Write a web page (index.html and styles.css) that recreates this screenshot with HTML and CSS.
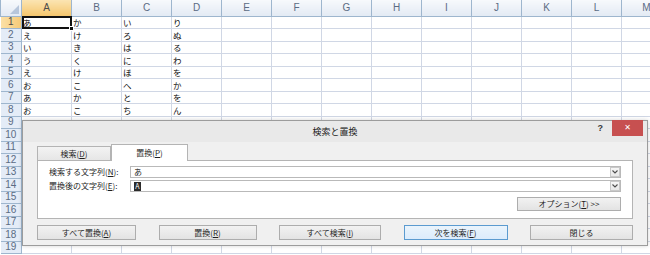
FILE: index.html
```html
<!DOCTYPE html>
<html lang="ja">
<head>
  <meta charset="UTF-8">
  <title>検索と置換</title>
  <link rel="stylesheet" href="styles.css">
</head>
<body>

  <!-- Worksheet -->
  <div class="sheet">
    <table class="grid">
      <colgroup>
        <col class="rowcol">
        <col span="13" class="datacol">
      </colgroup>
      <tr class="colhead">
        <th class="corner"><span class="corner-mark"></span></th>
        <th class="sel">A</th><th>B</th><th>C</th><th>D</th><th>E</th><th>F</th><th>G</th>
        <th>H</th><th>I</th><th>J</th><th>K</th><th>L</th><th>M</th>
      </tr>
      <tr><th class="sel">1</th><td class="active">あ<span class="handle"></span></td><td>か</td><td>い</td><td>り</td><td></td><td></td><td></td><td></td><td></td><td></td><td></td><td></td><td></td></tr>
      <tr><th>2</th><td>え</td><td>け</td><td>ろ</td><td>ぬ</td><td></td><td></td><td></td><td></td><td></td><td></td><td></td><td></td><td></td></tr>
      <tr><th>3</th><td>い</td><td>き</td><td>は</td><td>る</td><td></td><td></td><td></td><td></td><td></td><td></td><td></td><td></td><td></td></tr>
      <tr><th>4</th><td>う</td><td>く</td><td>に</td><td>わ</td><td></td><td></td><td></td><td></td><td></td><td></td><td></td><td></td><td></td></tr>
      <tr><th>5</th><td>え</td><td>け</td><td>ほ</td><td>を</td><td></td><td></td><td></td><td></td><td></td><td></td><td></td><td></td><td></td></tr>
      <tr><th>6</th><td>お</td><td>こ</td><td>へ</td><td>か</td><td></td><td></td><td></td><td></td><td></td><td></td><td></td><td></td><td></td></tr>
      <tr><th>7</th><td>あ</td><td>か</td><td>と</td><td>を</td><td></td><td></td><td></td><td></td><td></td><td></td><td></td><td></td><td></td></tr>
      <tr><th>8</th><td>お</td><td>こ</td><td>ち</td><td>ん</td><td></td><td></td><td></td><td></td><td></td><td></td><td></td><td></td><td></td></tr>
      <tr><th>9</th><td></td><td></td><td></td><td></td><td></td><td></td><td></td><td></td><td></td><td></td><td></td><td></td><td></td></tr>
      <tr><th>10</th><td></td><td></td><td></td><td></td><td></td><td></td><td></td><td></td><td></td><td></td><td></td><td></td><td></td></tr>
      <tr><th>11</th><td></td><td></td><td></td><td></td><td></td><td></td><td></td><td></td><td></td><td></td><td></td><td></td><td></td></tr>
      <tr><th>12</th><td></td><td></td><td></td><td></td><td></td><td></td><td></td><td></td><td></td><td></td><td></td><td></td><td></td></tr>
      <tr><th>13</th><td></td><td></td><td></td><td></td><td></td><td></td><td></td><td></td><td></td><td></td><td></td><td></td><td></td></tr>
      <tr><th>14</th><td></td><td></td><td></td><td></td><td></td><td></td><td></td><td></td><td></td><td></td><td></td><td></td><td></td></tr>
      <tr><th>15</th><td></td><td></td><td></td><td></td><td></td><td></td><td></td><td></td><td></td><td></td><td></td><td></td><td></td></tr>
      <tr><th>16</th><td></td><td></td><td></td><td></td><td></td><td></td><td></td><td></td><td></td><td></td><td></td><td></td><td></td></tr>
      <tr><th>17</th><td></td><td></td><td></td><td></td><td></td><td></td><td></td><td></td><td></td><td></td><td></td><td></td><td></td></tr>
      <tr><th>18</th><td></td><td></td><td></td><td></td><td></td><td></td><td></td><td></td><td></td><td></td><td></td><td></td><td></td></tr>
      <tr><th>19</th><td></td><td></td><td></td><td></td><td></td><td></td><td></td><td></td><td></td><td></td><td></td><td></td><td></td></tr>
    </table>

    <!-- Find & Replace dialog -->
    <div class="dialog">
      <div class="titlebar">
        <span></span>
        <span class="title">検索と置換</span>
        <div class="controls">
          <span class="help">?</span>
          <span class="close">✕</span>
        </div>
      </div>

      <div class="dialog-body">
        <div class="tabs">
          <div class="tab">検索(<u>D</u>)</div>
          <div class="tab active">置換(<u>P</u>)</div>
        </div>

        <div class="panel">
          <div class="field">
            <label>検索する文字列(<u>N</u>):</label>
            <div class="combo">
              <span class="value">あ</span>
              <span class="arrow"><svg width="6" height="4" viewBox="0 0 6 4"><path d="M0.5 0.5 L3 3 L5.5 0.5" fill="none" stroke="#4d4d4d" stroke-width="1.1"/></svg></span>
            </div>
          </div>
          <div class="field">
            <label>置換後の文字列(<u>E</u>):</label>
            <div class="combo">
              <span class="value"><span class="picked">A</span></span>
              <span class="arrow"><svg width="6" height="4" viewBox="0 0 6 4"><path d="M0.5 0.5 L3 3 L5.5 0.5" fill="none" stroke="#4d4d4d" stroke-width="1.1"/></svg></span>
            </div>
          </div>
          <div class="options-row">
            <button class="btn options">オプション(<u>T</u>) &gt;&gt;</button>
          </div>
        </div>

        <div class="actions">
          <button class="btn">すべて置換(<u>A</u>)</button>
          <button class="btn">置換(<u>R</u>)</button>
          <button class="btn">すべて検索(<u>I</u>)</button>
          <button class="btn default">次を検索(<u>F</u>)</button>
          <button class="btn">閉じる</button>
        </div>
      </div>
    </div>
  </div>

</body>
</html>
```

FILE: styles.css
```css
* {
  margin: 0;
  padding: 0;
  box-sizing: border-box;
}

body {
  width: 650px;
  height: 255px;
  overflow: hidden;
  background-color: #ffffff;
  font-family: "Noto Sans CJK JP", "Noto Sans", sans-serif;
}

/* Worksheet */

.sheet {
  position: relative;
  width: 650px;
  height: 255px;
  overflow: hidden;
}

.grid {
  border-collapse: collapse;
  table-layout: fixed;
  width: 671px;
}

.rowcol {
  width: 21px;
}

.datacol {
  width: 50px;
}

.grid tr {
  height: 12.5px;
}

.grid .colhead {
  height: 16px;
}

.grid th {
  font-family: "Liberation Sans", Arial, sans-serif;
  font-weight: normal;
  font-size: 10px;
  line-height: 10px;
  color: #5b6b83;
  padding: 0;
  overflow: hidden;
}

.colhead th {
  background: linear-gradient(#f7f9fc, #e3eaf4);
  border: 1px solid #9eb6ce;
  border-top: none;
  text-align: center;
  vertical-align: middle;
}

.grid tr:not(.colhead) th {
  background-color: #e4ecf7;
  border: 1px solid #9eb6ce;
  border-left: none;
  text-align: center;
}

.grid th.sel {
  background: linear-gradient(#fbe4b2, #f5c66d);
  color: #4c4c4c;
}

.grid tr:not(.colhead) th.sel {
  background: linear-gradient(90deg, #fbe0a6, #f6ca78);
}

.corner {
  position: relative;
}

.corner-mark {
  position: absolute;
  right: 2px;
  bottom: 2px;
  width: 0;
  height: 0;
  border-left: 9px solid transparent;
  border-bottom: 9px solid #b7c6db;
}

.grid td {
  border: 1px solid #d0d7e5;
  font-size: 8.5px;
  line-height: 11px;
  padding: 0 1px;
  color: #111111;
  vertical-align: bottom;
  white-space: nowrap;
  overflow: hidden;
}

.grid td.active {
  position: relative;
  overflow: visible;
  outline: 2px solid #111111;
  outline-offset: -2px;
}

.handle {
  position: absolute;
  right: -3px;
  bottom: -3px;
  width: 5px;
  height: 5px;
  background-color: #111111;
  border: 1px solid #ffffff;
}

/* Dialog */

.dialog {
  position: absolute;
  left: 22px;
  top: 120px;
  width: 626px;
  height: 126px;
  background-color: #f0f0f0;
  border: 1px solid #9c9c9c;
  box-shadow: 0 0 4px rgba(0, 0, 0, 0.18);
  font-size: 8px;
  color: #1e1e1e;
}

.titlebar {
  display: grid;
  grid-template-columns: 1fr auto 1fr;
  height: 21px;
  background-color: #e9e9e9;
}

.title {
  font-size: 9px;
  line-height: 21px;
  color: #222222;
}

.controls {
  display: flex;
  justify-content: flex-end;
  align-items: flex-start;
  padding-right: 4px;
}

.help {
  font-family: "Liberation Sans", Arial, sans-serif;
  font-weight: bold;
  font-size: 9px;
  line-height: 15px;
  color: #3a3a3a;
  margin-right: 9px;
}

.close {
  width: 31px;
  height: 16px;
  margin-top: -1px;
  background-color: #c75050;
  color: #ffffff;
  font-family: "DejaVu Sans", sans-serif;
  font-size: 8px;
  line-height: 16px;
  text-align: center;
}

.dialog-body {
  padding: 0 14px;
}

.tabs {
  display: flex;
  align-items: flex-end;
  height: 18px;
}

.tab {
  width: 74px;
  height: 14px;
  border: 1px solid #b4b4b4;
  border-bottom: none;
  background: linear-gradient(#f3f3f3, #e6e6e6);
  text-align: center;
  line-height: 13px;
}

.tab.active {
  width: 77px;
  height: 17px;
  margin-bottom: -1px;
  background: #ffffff;
  position: relative;
  line-height: 15px;
}

.panel {
  height: 59px;
  background-color: #ffffff;
  border: 1px solid #b4b4b4;
  padding: 5px 11px 0 11px;
}

.field {
  display: flex;
  align-items: center;
  height: 12px;
  margin-bottom: 2px;
}

.field label {
  width: 81px;
  line-height: 12px;
}

.combo {
  flex: 1;
  display: flex;
  align-items: center;
  justify-content: space-between;
  height: 12px;
  border: 1px solid #b9b9b9;
  background-color: #ffffff;
}

.value {
  padding-left: 3px;
  line-height: 10px;
}

.picked {
  display: inline-block;
  background-color: #2b2b2b;
  color: #ffffff;
  width: 7px;
  height: 9px;
  line-height: 9px;
  text-align: center;
  font-size: 7px;
  vertical-align: middle;
}

.arrow {
  display: flex;
  align-items: center;
  justify-content: center;
  width: 10px;
  height: 10px;
  border: 1px solid #c9c9c9;
  background: linear-gradient(#f6f6f6, #e8e8e8);
}

.options-row {
  display: flex;
  justify-content: flex-end;
  margin-top: 5px;
}

.btn {
  height: 15px;
  border: 1px solid #adadad;
  background: linear-gradient(#f2f2f2, #e3e3e3);
  font-family: "Noto Sans CJK JP", "Noto Sans", sans-serif;
  font-size: 8px;
  line-height: 13px;
  color: #1e1e1e;
}

.btn.options {
  width: 104px;
  height: 14px;
  line-height: 12px;
}

.btn.default {
  border-color: #5b9bd0;
  background: linear-gradient(#eaf4fc, #dcecfc);
}

.actions {
  display: grid;
  grid-template-columns: 99px 98px 102px 104px 103px;
  justify-content: space-between;
  margin-top: 6px;
}
```
